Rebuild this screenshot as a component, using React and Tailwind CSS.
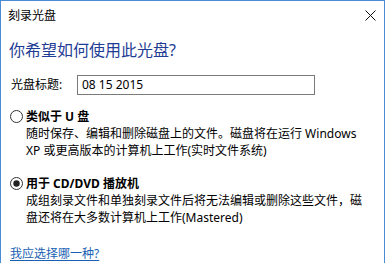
export default function App() {
  const font = { fontFamily: '"Noto Sans", "Noto Sans CJK SC", sans-serif' };
  return (
    <div
      className="w-[385px] h-[263px] bg-white border-l border-t border-r border-[#4a8bd6] overflow-hidden text-black flex flex-col"
      style={font}
    >
      <div className="h-[29px] flex items-center justify-between pl-[7px] pr-[8px]">
        <span className="text-[12px] leading-[16px]">刻录光盘</span>
        <svg width="11" height="11" viewBox="0 0 11 11">
          <path d="M0.5 0.5 L10.5 10.5 M10.5 0.5 L0.5 10.5" stroke="#111" strokeWidth="1" />
        </svg>
      </div>
      <div className="mt-[10px] pl-[8px] text-[16px] leading-[20px] text-[#1f3d95]">
        你希望如何使用此光盘?
      </div>
      <div className="mt-[15px] flex items-center h-[20px] pl-[10px]">
        <span className="text-[12px] leading-[16px] w-[66px]">光盘标题:</span>
        <div className="w-[238px] h-[20px] border border-[#7a7a7a] flex items-center pl-[4px] text-[12px] leading-[16px]">
          08 15 2015
        </div>
      </div>
      <div className="mt-[13px] pl-[9px]">
        <div className="flex items-center h-[17px]">
          <svg width="13" height="13" viewBox="0 0 13 13" className="shrink-0">
            <circle cx="6.5" cy="6.5" r="6" fill="white" stroke="#333" strokeWidth="1" />
          </svg>
          <span className="ml-[3px] text-[12px] leading-[17px] font-bold">类似于 U 盘</span>
        </div>
        <div className="pl-[16px] text-[12px] leading-[17px]">
          <div>随时保存、编辑和删除磁盘上的文件。磁盘将在运行 Windows</div>
          <div>XP 或更高版本的计算机上工作(实时文件系统)</div>
        </div>
      </div>
      <div className="mt-[16px] pl-[9px]">
        <div className="flex items-center h-[17px]">
          <svg width="13" height="13" viewBox="0 0 13 13" className="shrink-0">
            <circle cx="6.5" cy="6.5" r="6" fill="white" stroke="#333" strokeWidth="1" />
            <circle cx="6.5" cy="6.5" r="3.2" fill="#222" />
          </svg>
          <span className="ml-[3px] text-[12px] leading-[17px] font-bold">用于 CD/DVD 播放机</span>
        </div>
        <div className="pl-[16px] text-[12px] leading-[17px]">
          <div>成组刻录文件和单独刻录文件后将无法编辑或删除这些文件，磁</div>
          <div>盘还将在大多数计算机上工作(Mastered)</div>
        </div>
      </div>
      <div className="mt-[19px] pl-[9px] text-[12px] leading-[17px]">
        <span className="text-[#1a5fb4] underline underline-offset-2">我应选择哪一种?</span>
      </div>
    </div>
  );
}
